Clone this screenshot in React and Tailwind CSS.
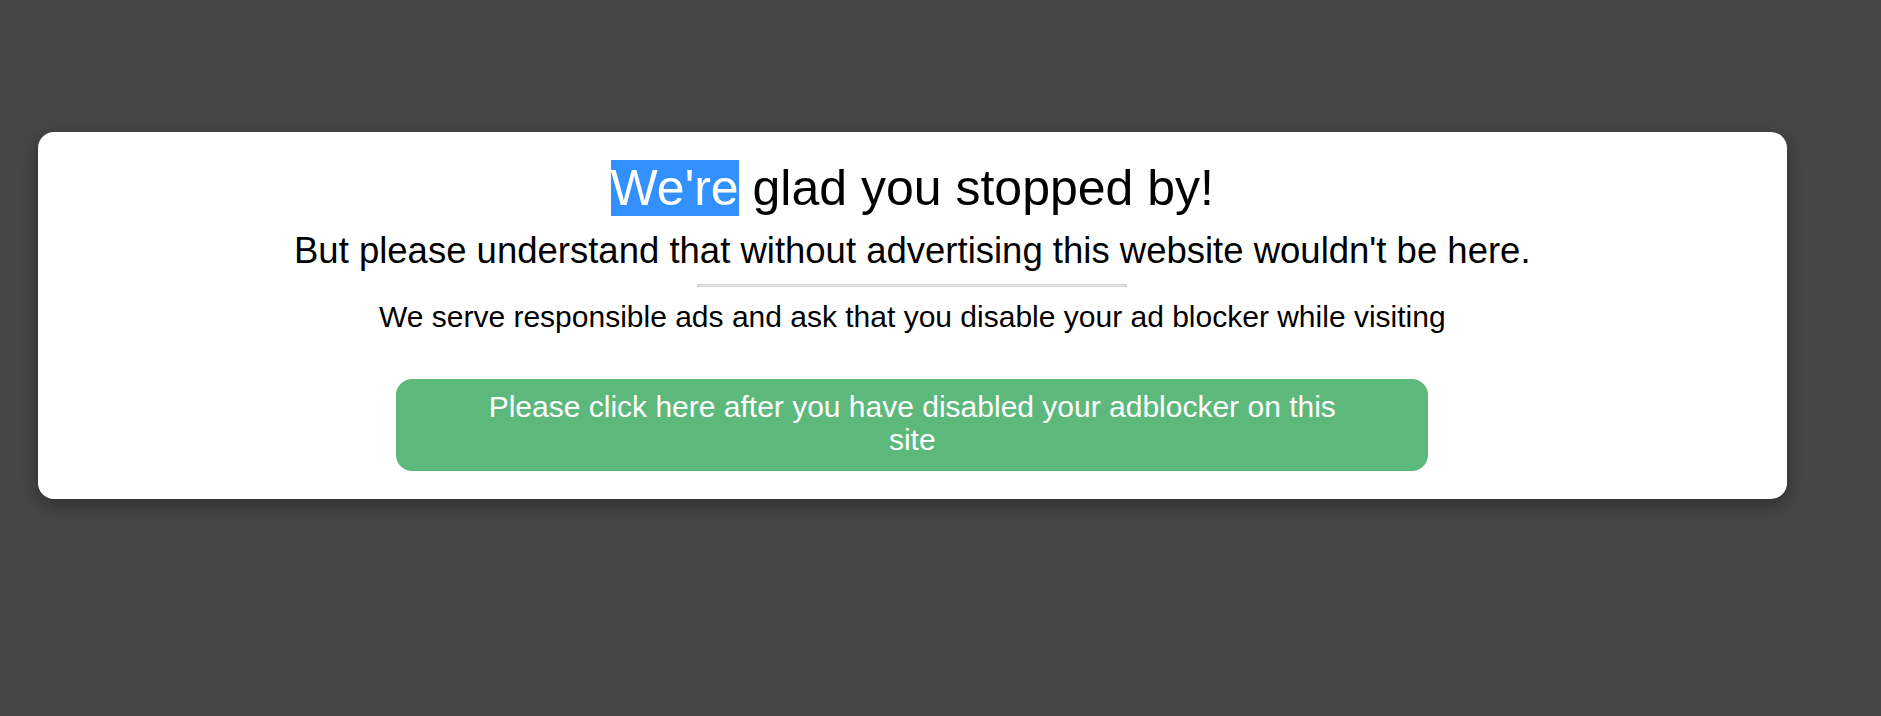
import React from "react";

const AdblockNotice = () => {
    return (
        <div className="w-[93%] ml-[2%] bg-white rounded-[16px] shadow-[0_6px_18px_rgba(0,0,0,0.35)] text-center text-black pt-[28px] pb-[28px]">
            <h1 className="text-[50px] leading-[1.15] font-normal">
                <span className="bg-[#3390ff] text-white">We're</span> glad you stopped by!
            </h1>
            <h2 className="mt-[12px] text-[36.5px] leading-[1.15] font-normal">
                But please understand that without advertising this website wouldn't be here.
            </h2>
            <div className="mx-auto mt-[13px] w-[430px] h-[3px] border border-[#cfcfcf] bg-[#ececec]" />
            <p className="mt-[13px] text-[30px] leading-[1.15]">
                We serve responsible ads and ask that you disable your ad blocker while visiting
            </p>
            <button className="mx-auto mt-[44px] block w-[1032px] rounded-[16px] bg-[#5cb97b] px-[82px] pt-[11px] pb-[14px] text-[30px] leading-[33.5px] text-white">
                Please click here after you have disabled your adblocker on this site
            </button>
        </div>
    );
};

export default function App() {
    return (
        <div
            className="min-h-[716px] w-full bg-[#464646] pt-[132px]"
            style={{ fontFamily: '"Liberation Sans", Arial, sans-serif' }}
        >
            <AdblockNotice />
        </div>
    );
}
